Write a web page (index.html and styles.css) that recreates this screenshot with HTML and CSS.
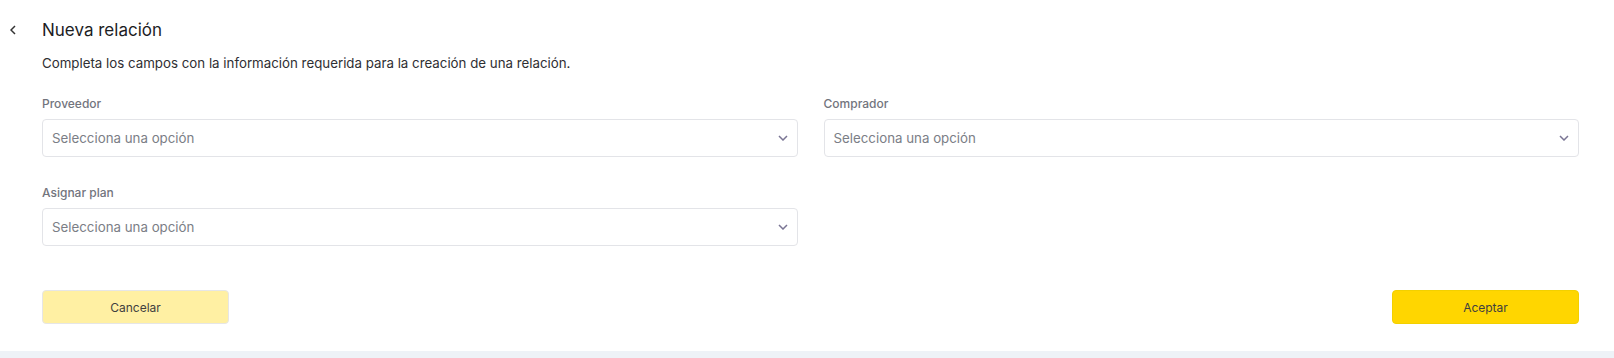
FILE: index.html
```html
<!DOCTYPE html>
<html lang="es">
  <head>
    <meta charset="UTF-8" />
    <meta name="viewport" content="width=device-width, initial-scale=1.0" />
    <title>Nueva relación</title>
    <link rel="stylesheet" href="styles.css">
  </head>
  <body>
    <div class="page">
      <button class="back" type="button">
        <svg width="6" height="10" viewBox="0 0 6 10">
          <path d="M5 1 L1 5 L5 9" fill="none" stroke="#333" stroke-width="1.5" />
        </svg>
      </button>
      <div class="content">
        <h1 class="title">Nueva relación</h1>
        <p class="subtitle">Completa los campos con la información requerida para la creación de una relación.</p>
        <div class="fields">
          <div class="field">
            <label>Proveedor</label>
            <div class="select">
              <span>Selecciona una opción</span>
              <svg width="10" height="6" viewBox="0 0 10 6">
                <path d="M1 1 L5 5 L9 1" fill="none" stroke="#7a7594" stroke-width="1.5" />
              </svg>
            </div>
          </div>
          <div class="field">
            <label>Comprador</label>
            <div class="select">
              <span>Selecciona una opción</span>
              <svg width="10" height="6" viewBox="0 0 10 6">
                <path d="M1 1 L5 5 L9 1" fill="none" stroke="#7a7594" stroke-width="1.5" />
              </svg>
            </div>
          </div>
          <div class="field">
            <label>Asignar plan</label>
            <div class="select">
              <span>Selecciona una opción</span>
              <svg width="10" height="6" viewBox="0 0 10 6">
                <path d="M1 1 L5 5 L9 1" fill="none" stroke="#7a7594" stroke-width="1.5" />
              </svg>
            </div>
          </div>
        </div>
        <div class="actions">
          <button class="btn btn-cancel" type="button">Cancelar</button>
          <button class="btn btn-ok" type="button">Aceptar</button>
        </div>
      </div>
    </div>
  </body>
</html>
```

FILE: styles.css
```css
* {
  margin: 0;
  padding: 0;
  box-sizing: border-box;
  font-family: "Inter", "Liberation Sans", sans-serif;
}
body {
  background: #eef2f7;
  color: #222;
}
.page {
  background: #fff;
  display: grid;
  grid-template-columns: 42px 1fr;
  padding: 19px 35px 27px 0;
}
.back {
  border: 0;
  background: none;
  height: 22px;
  display: flex;
  align-items: center;
  padding-left: 10px;
  cursor: pointer;
}
.title {
  font-size: 17px;
  font-weight: 400;
  line-height: 22px;
  color: #1d1d1f;
}
.subtitle {
  font-size: 13.3px;
  line-height: 16px;
  color: #2f2f33;
  margin-top: 14px;
}
.fields {
  display: grid;
  grid-template-columns: 1fr 1fr;
  column-gap: 26px;
  row-gap: 28px;
  margin-top: 25px;
}
.field label {
  display: block;
  font-size: 12px;
  font-weight: 500;
  line-height: 15px;
  color: #72747d;
  margin-bottom: 8px;
}
.select {
  height: 38px;
  border: 1px solid #e3e4e8;
  border-radius: 4px;
  display: flex;
  align-items: center;
  justify-content: space-between;
  padding: 0 9px;
  font-size: 13.3px;
  color: #7b7e86;
}
.actions {
  display: flex;
  justify-content: space-between;
  margin-top: 44px;
}
.btn {
  width: 187px;
  height: 34px;
  border: 1px solid #e6e6e6;
  border-radius: 4px;
  font-size: 12px;
  color: #3f3f3f;
  cursor: pointer;
}
.btn-cancel {
  background: #fff0a3;
}
.btn-ok {
  background: #ffd600;
  border-color: #f2d000;
}
```
